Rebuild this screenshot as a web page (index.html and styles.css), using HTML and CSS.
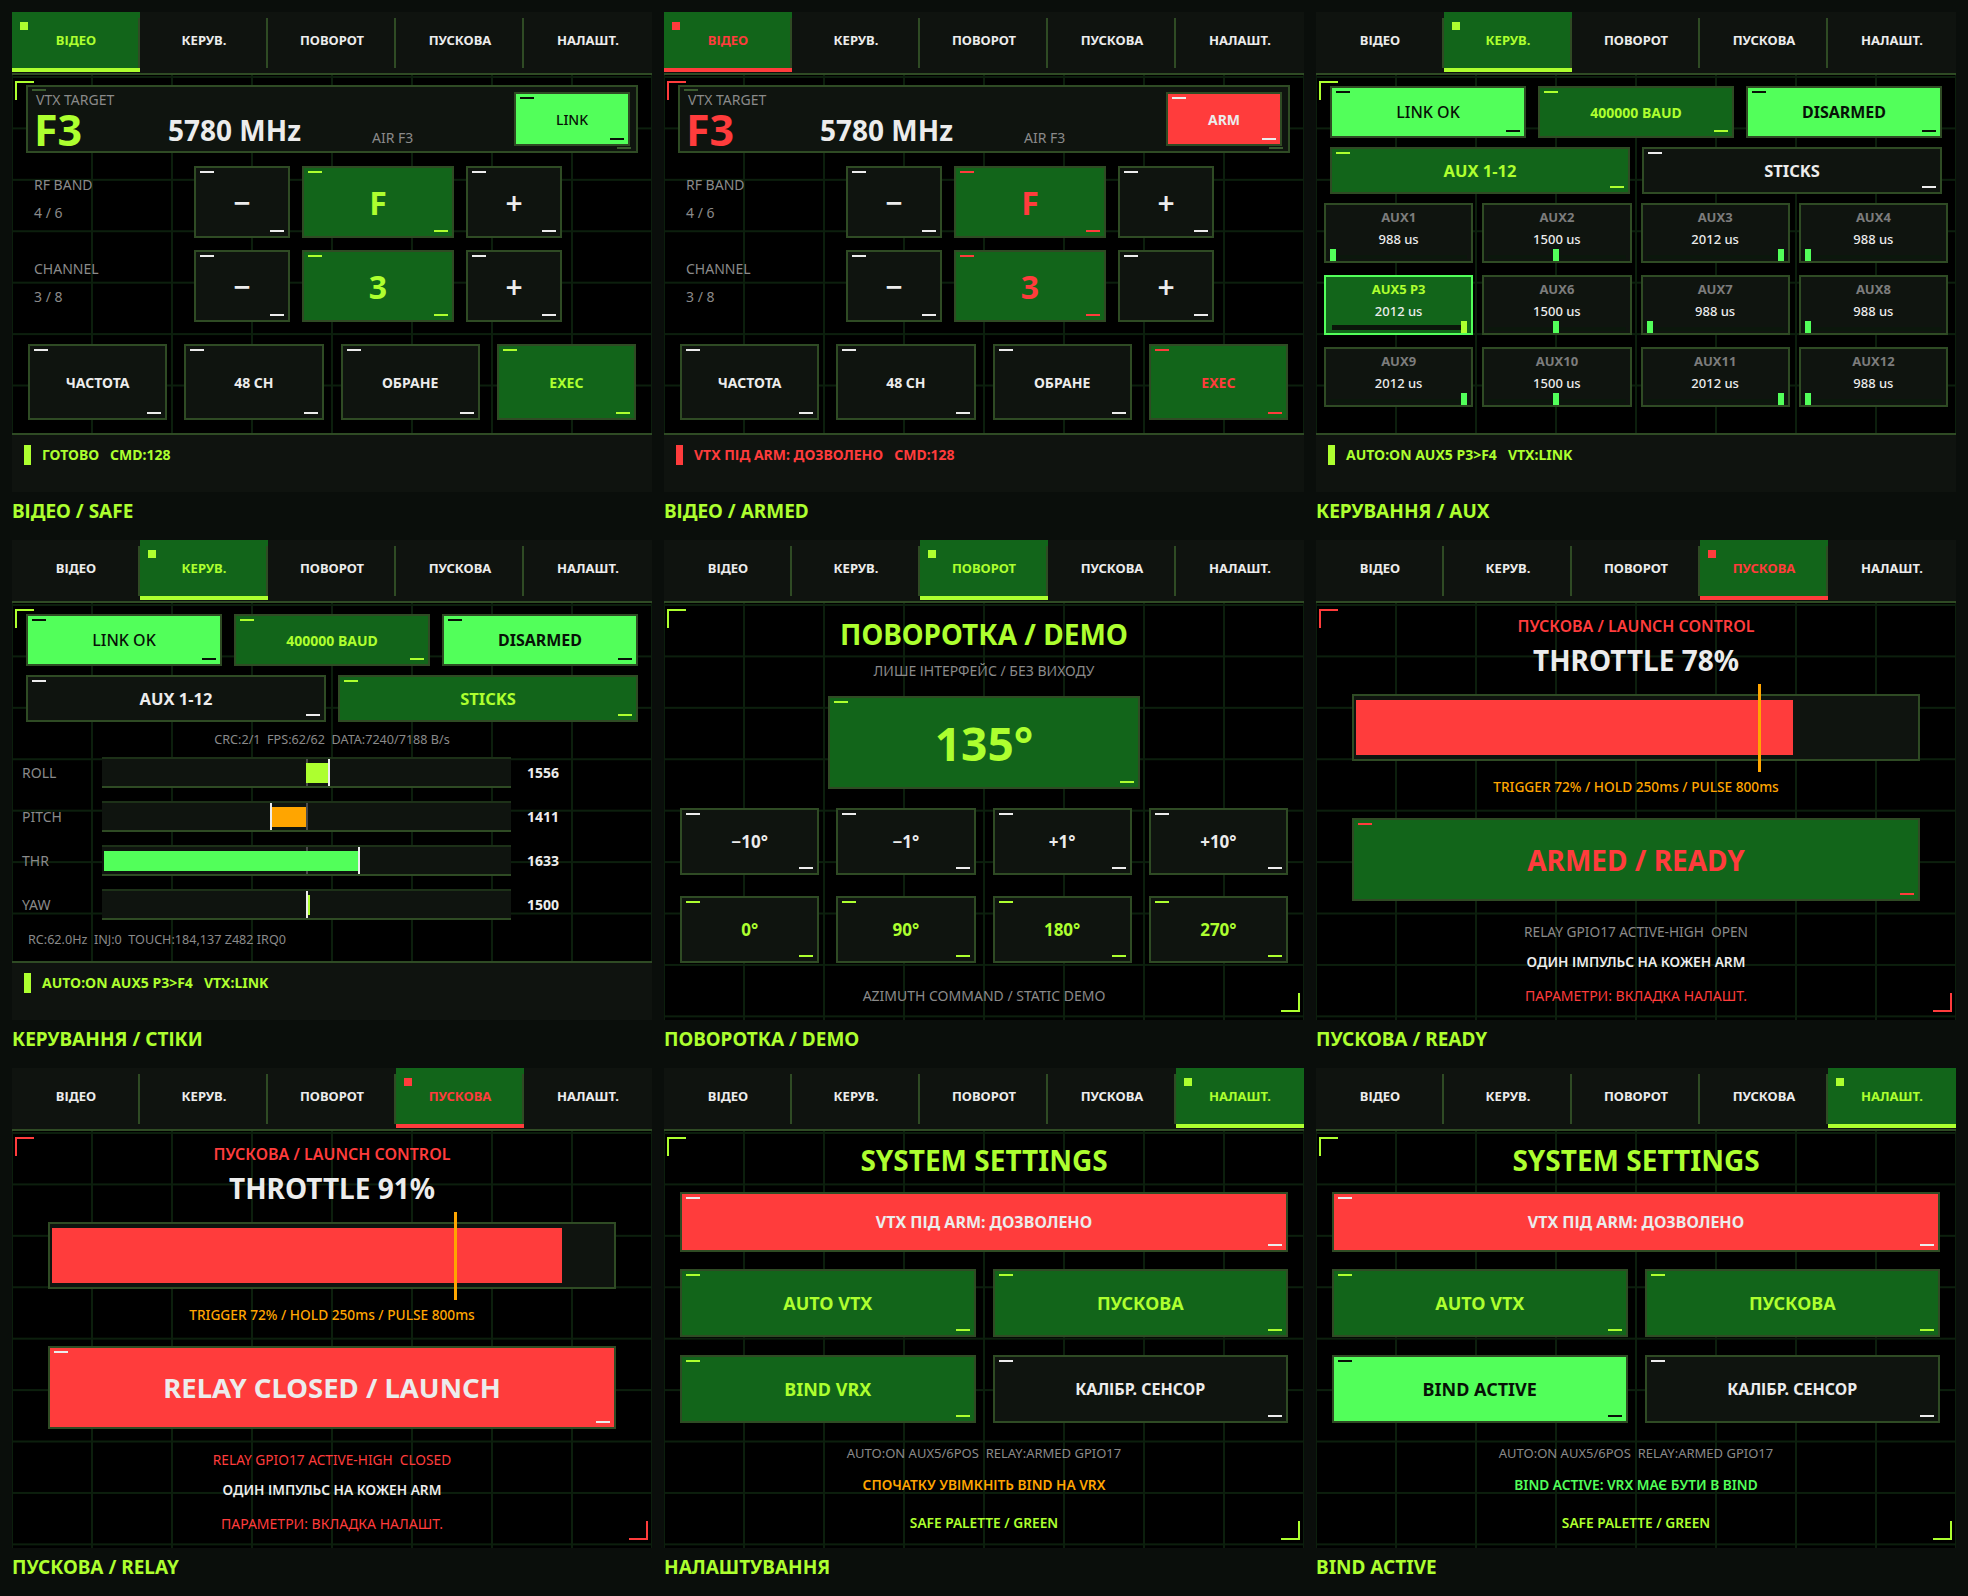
FILE: index.html
```html
<!DOCTYPE html>
<html lang="uk">
<head>
<meta charset="utf-8">
<title>Control UI states</title>
<link rel="stylesheet" href="styles.css">
</head>
<body>
<div class="board">

<section class="cell">
  <div class="screen">
    <nav class="tabs"><div class="tab on">ВІДЕО</div><div class="tab">КЕРУВ.</div><div class="tab">ПОВОРОТ</div><div class="tab">ПУСКОВА</div><div class="tab">НАЛАШТ.</div></nav>
    <div class="content">
      <div class="vtx">
        <div class="vtx-info"><div class="vtx-cap">VTX TARGET</div><div class="vtx-row"><span class="vtx-ch">F3</span><span class="vtx-freq">5780 MHz</span><span class="vtx-air">AIR F3</span></div></div>
        <div class="btn br link">LINK</div>
      </div>
      <div class="sel"><div class="sel-label"><div>RF BAND</div><div>4 / 6</div></div><div class="btn sym">−</div><div class="btn gr val">F</div><div class="btn sym">+</div></div>
      <div class="sel sel2"><div class="sel-label"><div>CHANNEL</div><div>3 / 8</div></div><div class="btn sym">−</div><div class="btn gr val">3</div><div class="btn sym">+</div></div>
      <div class="quad q-video"><div class="btn">ЧАСТОТА</div><div class="btn">48 CH</div><div class="btn">ОБРАНЕ</div><div class="btn gr">EXEC</div></div>
    </div>
    <div class="status"><i></i><span>ГОТОВО</span><span>CMD:128</span></div>
  </div>
  <div class="caption">ВІДЕО / SAFE</div>
</section>

<section class="cell">
  <div class="screen red">
    <nav class="tabs"><div class="tab on">ВІДЕО</div><div class="tab">КЕРУВ.</div><div class="tab">ПОВОРОТ</div><div class="tab">ПУСКОВА</div><div class="tab">НАЛАШТ.</div></nav>
    <div class="content">
      <div class="vtx">
        <div class="vtx-info"><div class="vtx-cap">VTX TARGET</div><div class="vtx-row"><span class="vtx-ch">F3</span><span class="vtx-freq">5780 MHz</span><span class="vtx-air">AIR F3</span></div></div>
        <div class="btn rd link arm">ARM</div>
      </div>
      <div class="sel"><div class="sel-label"><div>RF BAND</div><div>4 / 6</div></div><div class="btn sym">−</div><div class="btn gr rt val">F</div><div class="btn sym">+</div></div>
      <div class="sel sel2"><div class="sel-label"><div>CHANNEL</div><div>3 / 8</div></div><div class="btn sym">−</div><div class="btn gr rt val">3</div><div class="btn sym">+</div></div>
      <div class="quad q-video"><div class="btn">ЧАСТОТА</div><div class="btn">48 CH</div><div class="btn">ОБРАНЕ</div><div class="btn gr rt">EXEC</div></div>
    </div>
    <div class="status"><i></i><span>VTX ПІД ARM: ДОЗВОЛЕНО</span><span>CMD:128</span></div>
  </div>
  <div class="caption">ВІДЕО / ARMED</div>
</section>

<section class="cell">
  <div class="screen">
    <nav class="tabs"><div class="tab">ВІДЕО</div><div class="tab on">КЕРУВ.</div><div class="tab">ПОВОРОТ</div><div class="tab">ПУСКОВА</div><div class="tab">НАЛАШТ.</div></nav>
    <div class="content">
      <div class="tri"><div class="btn br lk">LINK OK</div><div class="btn gr sm">400000 BAUD</div><div class="btn br">DISARMED</div></div>
      <div class="duo"><div class="btn gr">AUX 1-12</div><div class="btn">STICKS</div></div>
      <div class="aux">
        <div class="auxc"><b>AUX1</b><span>988 us</span><i class="trk"></i><i class="mk" style="left:4px"></i></div>
        <div class="auxc"><b>AUX2</b><span>1500 us</span><i class="trk"></i><i class="mk" style="left:69px"></i></div>
        <div class="auxc"><b>AUX3</b><span>2012 us</span><i class="trk"></i><i class="mk" style="left:135px"></i></div>
        <div class="auxc"><b>AUX4</b><span>988 us</span><i class="trk"></i><i class="mk" style="left:4px"></i></div>
        <div class="auxc hi"><b>AUX5 P3</b><span>2012 us</span><i class="trk"></i><i class="mk" style="left:135px"></i></div>
        <div class="auxc"><b>AUX6</b><span>1500 us</span><i class="trk"></i><i class="mk" style="left:69px"></i></div>
        <div class="auxc"><b>AUX7</b><span>988 us</span><i class="trk"></i><i class="mk" style="left:4px"></i></div>
        <div class="auxc"><b>AUX8</b><span>988 us</span><i class="trk"></i><i class="mk" style="left:4px"></i></div>
        <div class="auxc"><b>AUX9</b><span>2012 us</span><i class="trk"></i><i class="mk" style="left:135px"></i></div>
        <div class="auxc"><b>AUX10</b><span>1500 us</span><i class="trk"></i><i class="mk" style="left:69px"></i></div>
        <div class="auxc"><b>AUX11</b><span>2012 us</span><i class="trk"></i><i class="mk" style="left:135px"></i></div>
        <div class="auxc"><b>AUX12</b><span>988 us</span><i class="trk"></i><i class="mk" style="left:4px"></i></div>
      </div>
    </div>
    <div class="status"><i></i><span>AUTO:ON AUX5 P3&gt;F4</span><span>VTX:LINK</span></div>
  </div>
  <div class="caption">КЕРУВАННЯ / AUX</div>
</section>

<section class="cell">
  <div class="screen">
    <nav class="tabs"><div class="tab">ВІДЕО</div><div class="tab on">КЕРУВ.</div><div class="tab">ПОВОРОТ</div><div class="tab">ПУСКОВА</div><div class="tab">НАЛАШТ.</div></nav>
    <div class="content">
      <div class="tri"><div class="btn br lk">LINK OK</div><div class="btn gr sm">400000 BAUD</div><div class="btn br">DISARMED</div></div>
      <div class="duo"><div class="btn">AUX 1-12</div><div class="btn gr">STICKS</div></div>
      <div class="crc">CRC:2/1&nbsp; FPS:62/62&nbsp; DATA:7240/7188 B/s</div>
      <div class="sticks">
        <div class="stk"><span class="nm">ROLL</span><div class="bar"><i class="c"></i><i class="f lime" style="left:204px;width:23px"></i><i class="w" style="left:226px"></i></div><span class="num">1556</span></div>
        <div class="stk"><span class="nm">PITCH</span><div class="bar"><i class="c"></i><i class="f orange" style="left:170px;width:34px"></i><i class="w" style="left:168px"></i></div><span class="num">1411</span></div>
        <div class="stk"><span class="nm">THR</span><div class="bar"><i class="c"></i><i class="f bright" style="left:2px;width:254px"></i><i class="w" style="left:256px"></i></div><span class="num">1633</span></div>
        <div class="stk"><span class="nm">YAW</span><div class="bar"><i class="c"></i><i class="w" style="left:204px"></i><i class="y" style="left:206px"></i></div><span class="num">1500</span></div>
      </div>
      <div class="rc">RC:62.0Hz&nbsp; INJ:0&nbsp; TOUCH:184,137 Z482 IRQ0</div>
    </div>
    <div class="status"><i></i><span>AUTO:ON AUX5 P3&gt;F4</span><span>VTX:LINK</span></div>
  </div>
  <div class="caption">КЕРУВАННЯ / СТІКИ</div>
</section>

<section class="cell">
  <div class="screen">
    <nav class="tabs"><div class="tab">ВІДЕО</div><div class="tab">КЕРУВ.</div><div class="tab on">ПОВОРОТ</div><div class="tab">ПУСКОВА</div><div class="tab">НАЛАШТ.</div></nav>
    <div class="content full">
      <div class="title t-rot">ПОВОРОТКА / DEMO</div>
      <div class="line gray l-sub">ЛИШЕ ІНТЕРФЕЙС / БЕЗ ВИХОДУ</div>
      <div class="btn gr azi">135°</div>
      <div class="quad q-rot1"><div class="btn">−10°</div><div class="btn">−1°</div><div class="btn">+1°</div><div class="btn">+10°</div></div>
      <div class="quad q-rot2"><div class="btn lt">0°</div><div class="btn lt">90°</div><div class="btn lt">180°</div><div class="btn lt">270°</div></div>
      <div class="line gray l-foot">AZIMUTH COMMAND / STATIC DEMO</div>
    </div>
  </div>
  <div class="caption">ПОВОРОТКА / DEMO</div>
</section>

<section class="cell">
  <div class="screen red">
    <nav class="tabs"><div class="tab">ВІДЕО</div><div class="tab">КЕРУВ.</div><div class="tab">ПОВОРОТ</div><div class="tab on">ПУСКОВА</div><div class="tab">НАЛАШТ.</div></nav>
    <div class="content full">
      <div class="line redt semi l-lc">ПУСКОВА / LAUNCH CONTROL</div>
      <div class="title white t-thr">THROTTLE 78%</div>
      <div class="thr"><i class="fill" style="width:437px"></i><i class="trig" style="left:404px"></i></div>
      <div class="line orange med l-trg">TRIGGER 72% / HOLD 250ms / PULSE 800ms</div>
      <div class="btn gr rt launch">ARMED / READY</div>
      <div class="line gray l-relay">RELAY GPIO17 ACTIVE-HIGH&nbsp; OPEN</div>
      <div class="line white semi l-one">ОДИН ІМПУЛЬС НА КОЖЕН ARM</div>
      <div class="line redt l-par">ПАРАМЕТРИ: ВКЛАДКА НАЛАШТ.</div>
    </div>
  </div>
  <div class="caption">ПУСКОВА / READY</div>
</section>

<section class="cell">
  <div class="screen red">
    <nav class="tabs"><div class="tab">ВІДЕО</div><div class="tab">КЕРУВ.</div><div class="tab">ПОВОРОТ</div><div class="tab on">ПУСКОВА</div><div class="tab">НАЛАШТ.</div></nav>
    <div class="content full">
      <div class="line redt semi l-lc">ПУСКОВА / LAUNCH CONTROL</div>
      <div class="title white t-thr">THROTTLE 91%</div>
      <div class="thr"><i class="fill" style="width:510px"></i><i class="trig" style="left:404px"></i></div>
      <div class="line orange med l-trg">TRIGGER 72% / HOLD 250ms / PULSE 800ms</div>
      <div class="btn rd launch relay">RELAY CLOSED / LAUNCH</div>
      <div class="line redt l-relay">RELAY GPIO17 ACTIVE-HIGH&nbsp; CLOSED</div>
      <div class="line white semi l-one">ОДИН ІМПУЛЬС НА КОЖЕН ARM</div>
      <div class="line redt l-par">ПАРАМЕТРИ: ВКЛАДКА НАЛАШТ.</div>
    </div>
  </div>
  <div class="caption">ПУСКОВА / RELAY</div>
</section>

<section class="cell">
  <div class="screen">
    <nav class="tabs"><div class="tab">ВІДЕО</div><div class="tab">КЕРУВ.</div><div class="tab">ПОВОРОТ</div><div class="tab">ПУСКОВА</div><div class="tab on">НАЛАШТ.</div></nav>
    <div class="content full">
      <div class="title t-set">SYSTEM SETTINGS</div>
      <div class="btn rd wide">VTX ПІД ARM: ДОЗВОЛЕНО</div>
      <div class="pair p1"><div class="btn gr">AUTO VTX</div><div class="btn gr">ПУСКОВА</div></div>
      <div class="pair p2"><div class="btn gr">BIND VRX</div><div class="btn cal">КАЛІБР. СЕНСОР</div></div>
      <div class="line gray l-s1">AUTO:ON AUX5/6POS&nbsp; RELAY:ARMED GPIO17</div>
      <div class="line orange semi l-s2">СПОЧАТКУ УВІМКНІТЬ BIND НА VRX</div>
      <div class="line limet semi l-s3">SAFE PALETTE / GREEN</div>
    </div>
  </div>
  <div class="caption">НАЛАШТУВАННЯ</div>
</section>

<section class="cell">
  <div class="screen">
    <nav class="tabs"><div class="tab">ВІДЕО</div><div class="tab">КЕРУВ.</div><div class="tab">ПОВОРОТ</div><div class="tab">ПУСКОВА</div><div class="tab on">НАЛАШТ.</div></nav>
    <div class="content full">
      <div class="title t-set">SYSTEM SETTINGS</div>
      <div class="btn rd wide">VTX ПІД ARM: ДОЗВОЛЕНО</div>
      <div class="pair p1"><div class="btn gr">AUTO VTX</div><div class="btn gr">ПУСКОВА</div></div>
      <div class="pair p2"><div class="btn br">BIND ACTIVE</div><div class="btn cal">КАЛІБР. СЕНСОР</div></div>
      <div class="line gray l-s1">AUTO:ON AUX5/6POS&nbsp; RELAY:ARMED GPIO17</div>
      <div class="line brightt semi l-s2">BIND ACTIVE: VRX МАЄ БУТИ В BIND</div>
      <div class="line limet semi l-s3">SAFE PALETTE / GREEN</div>
    </div>
  </div>
  <div class="caption">BIND ACTIVE</div>
</section>

</div>
</body>
</html>
```

FILE: styles.css
```css
:root {
  --bg: #0a0e0b;
  --bar: #0f130f;
  --olive: #2f4b24;
  --grid: #0c1f0d;
  --dk: #0f140f;
  --green: #12651a;
  --lime: #adff2f;
  --bright: #52ff5a;
  --red: #ff3c3c;
  --orange: #ffa500;
  --gray: #8a8a8a;
  --white: #ececec;
  --ink: #071207;
}

* { box-sizing: border-box; margin: 0; padding: 0; }

html, body { background: var(--bg); }

body {
  width: 1968px;
  height: 1596px;
  overflow: hidden;
  padding: 12px 0 0 12px;
  font-family: "Noto Sans", "DejaVu Sans Condensed", sans-serif;
  font-stretch: condensed;
  color: var(--white);
}

.board {
  display: grid;
  grid-template-columns: repeat(3, 640px);
  grid-template-rows: repeat(3, 528px);
  column-gap: 12px;
}

.screen {
  --acc: var(--lime);
  width: 640px;
  height: 480px;
  display: flex;
  flex-direction: column;
  background: #000;
  overflow: hidden;
}
.screen.red { --acc: var(--red); }

.caption {
  height: 48px;
  line-height: 38px;
  font-size: 19px;
  font-weight: 700;
  color: var(--lime);
}

/* tabs */
.tabs {
  display: flex;
  align-items: flex-start;
  height: 63px;
  flex: none;
  background: var(--bar);
  border-bottom: 2px solid var(--olive);
}
.tab {
  position: relative;
  flex: 1;
  height: 60px;
  padding-bottom: 5px;
  display: flex;
  align-items: center;
  justify-content: center;
  font-size: 13px;
  font-weight: 700;
  color: var(--white);
}
.tab:not(:last-child)::after {
  content: "";
  position: absolute;
  right: 0;
  top: 6px;
  bottom: 4px;
  width: 2px;
  background: var(--olive);
}
.tab.on {
  background: var(--green);
  color: var(--acc);
  box-shadow: inset 0 -4px 0 var(--acc);
}
.tab.on::before {
  content: "";
  position: absolute;
  left: 8px;
  top: 10px;
  width: 8px;
  height: 8px;
  background: var(--acc);
}

/* content area with grid */
.content {
  position: relative;
  flex: 1;
  display: flex;
  flex-direction: column;
  background-color: #000;
  background-image:
    linear-gradient(to right, var(--grid) 2px, transparent 2px),
    linear-gradient(to bottom, var(--grid) 2px, transparent 2px);
  background-size: 80px 51.43px;
  background-position: -1px 1px;
}
.content::before {
  content: "";
  position: absolute;
  left: 3px;
  top: 6px;
  width: 17px;
  height: 17px;
  border-top: 2px solid var(--acc);
  border-left: 2px solid var(--acc);
}
.content.full::after {
  content: "";
  position: absolute;
  right: 4px;
  bottom: 8px;
  width: 17px;
  height: 17px;
  border-bottom: 2px solid var(--acc);
  border-right: 2px solid var(--acc);
}

/* status bar */
.status {
  flex: none;
  height: 59px;
  display: flex;
  align-items: center;
  gap: 11px;
  padding: 0 12px 18px;
  background: var(--bar);
  border-top: 2px solid var(--olive);
  color: var(--acc);
  font-size: 14px;
  font-weight: 700;
  line-height: 20px;
}
.status i {
  width: 7px;
  height: 20px;
  background: currentColor;
}

/* buttons */
.btn {
  position: relative;
  display: flex;
  align-items: center;
  justify-content: center;
  background: var(--dk);
  border: 2px solid var(--olive);
  color: var(--white);
  font-size: 15px;
  font-weight: 700;
  white-space: nowrap;
}
.btn::before,
.btn::after {
  content: "";
  position: absolute;
  width: 14px;
  height: 2px;
  background: currentColor;
}
.btn::before { left: 4px; top: 3px; }
.btn::after { right: 4px; bottom: 4px; }

.btn.gr { background: var(--green); color: var(--lime); }
.btn.gr.rt { color: var(--red); }
.btn.br { background: var(--bright); color: var(--ink); }
.btn.rd { background: var(--red); color: var(--white); }
.btn.lt { color: var(--lime); }
.btn.sm { font-size: 14px; }

/* VTX target box */
.vtx {
  position: relative;
  display: flex;
  align-items: center;
  height: 68px;
  margin: 10px 14px 0;
  padding: 0 6px;
  background: var(--dk);
  border: 2px solid var(--olive);
}
.vtx::before,
.vtx::after {
  content: "";
  position: absolute;
  width: 14px;
  height: 2px;
  background: #3a5a2e;
}
.vtx::before { left: 4px; top: 2px; }
.vtx::after { right: 5px; bottom: 2px; }
.vtx-info {
  flex: 1;
  align-self: stretch;
  display: flex;
  flex-direction: column;
}
.vtx-cap {
  margin-top: 4px;
  padding-left: 2px;
  font-size: 14px;
  line-height: 18px;
  color: var(--gray);
}
.vtx-row {
  display: flex;
  align-items: center;
  height: 40px;
  margin-top: 1px;
}
.vtx-ch {
  width: 134px;
  font-size: 43px;
  font-weight: 700;
  line-height: 34px;
  color: var(--lime);
}
.red .vtx-ch { color: var(--red); }
.vtx-freq {
  width: 204px;
  font-size: 28px;
  font-weight: 700;
  line-height: 34px;
  color: var(--white);
}
.vtx-air {
  margin-top: 15px;
  font-size: 14px;
  color: var(--gray);
}
.btn.link {
  flex: none;
  width: 116px;
  height: 54px;
  font-size: 14px;
  font-weight: 500;
}
.btn.link.arm { font-weight: 700; }

/* band / channel selector rows */
.sel {
  display: grid;
  grid-template-columns: 148px 96px 152px 96px;
  column-gap: 12px;
  height: 72px;
  margin: 13px 0 0 22px;
}
.sel.sel2 { margin-top: 12px; }
.sel-label {
  padding-top: 9px;
  font-size: 14px;
  line-height: 19px;
  color: var(--gray);
}
.sel-label div + div { margin-top: 9px; }
.btn.sym { font-size: 30px; font-weight: 600; }
.btn.val { font-size: 32px; }

.quad {
  display: grid;
  grid-template-columns: repeat(4, 1fr);
  column-gap: 17px;
  padding: 0 16px;
}
.q-video { height: 76px; margin-top: 22px; }
.q-video .btn { font-size: 14px; }
.q-rot1 { height: 67px; margin-top: 19px; }
.q-rot2 { height: 67px; margin-top: 21px; }
.q-rot1 .btn, .q-rot2 .btn { font-size: 17px; }

/* control tab */
.tri {
  display: grid;
  grid-template-columns: repeat(3, 1fr);
  column-gap: 12px;
  height: 52px;
  margin: 11px 14px 0;
}
.tri .btn.br { font-size: 16px; }
.tri .btn.br.lk { font-weight: 500; }
.duo {
  display: grid;
  grid-template-columns: 1fr 1fr;
  column-gap: 12px;
  height: 47px;
  margin: 9px 14px 0;
}
.duo .btn { font-size: 16.5px; }
.aux {
  display: grid;
  grid-template-columns: repeat(4, 1fr);
  grid-auto-rows: 60px;
  column-gap: 9px;
  row-gap: 12px;
  margin: 9px 8px 0;
}
.auxc {
  position: relative;
  background: var(--dk);
  border: 2px solid var(--olive);
  text-align: center;
}
.auxc b {
  display: block;
  margin-top: 3px;
  font-size: 13px;
  line-height: 18px;
  font-weight: 700;
  color: #7c7c7c;
}
.auxc span {
  display: block;
  margin-top: 4px;
  font-size: 13px;
  line-height: 18px;
  font-weight: 500;
  color: var(--white);
}
.auxc .trk {
  position: absolute;
  left: 4px;
  right: 4px;
  bottom: 2px;
  height: 4px;
  background: #0b170c;
}
.auxc .mk {
  position: absolute;
  bottom: 0;
  width: 6px;
  height: 12px;
  background: var(--bright);
}
.auxc.hi { background: var(--green); border-color: var(--bright); }
.auxc.hi b { color: var(--lime); }
.auxc.hi .trk { left: 6px; right: 6px; bottom: 3px; height: 5px; background: #0a160a; }
.auxc.hi .mk { background: var(--lime); }

/* sticks */
.crc {
  margin-top: 8px;
  line-height: 20px;
  font-size: 12.6px;
  text-align: center;
  color: var(--gray);
}
.sticks {
  display: grid;
  row-gap: 13px;
  margin-top: 7px;
}
.stk {
  display: grid;
  grid-template-columns: 90px 409px 1fr;
  align-items: center;
  height: 31px;
}
.stk .nm {
  padding-left: 10px;
  font-size: 14px;
  color: var(--gray);
}
.stk .num {
  padding-left: 16px;
  font-size: 14px;
  font-weight: 700;
  color: var(--white);
}
.bar {
  position: relative;
  height: 31px;
  background: var(--dk);
  border-top: 2px solid #1d3118;
  border-bottom: 2px solid var(--olive);
}
.bar i { position: absolute; }
.bar .c { left: 204px; top: 0; bottom: 0; width: 2px; background: #4a4a4a; }
.bar .f { top: 4px; bottom: 3px; }
.bar .f.lime { background: var(--lime); }
.bar .f.orange { background: var(--orange); }
.bar .f.bright { background: var(--bright); }
.bar .w { top: 0; bottom: 0; width: 2px; background: var(--white); }
.bar .y { top: 4px; bottom: 3px; width: 2px; background: var(--lime); }
.rc {
  margin-top: 10px;
  padding-left: 16px;
  line-height: 20px;
  font-size: 12.6px;
  color: var(--gray);
}

/* centered text lines */
.title {
  line-height: 36px;
  font-size: 28px;
  font-weight: 700;
  text-align: center;
  color: var(--lime);
}
.title.white { color: var(--white); }
.line {
  line-height: 20px;
  font-size: 13.7px;
  text-align: center;
}
.semi { font-weight: 600; }
.med { font-weight: 500; }
.gray { color: var(--gray); }
.white { color: var(--white); }
.redt { color: var(--red); }
.orange { color: var(--orange); }
.limet { color: var(--lime); }
.brightt { color: var(--bright); }

/* rotator */
.t-rot { margin-top: 13px; }
.l-sub { margin-top: 9px; font-size: 14px; }
.btn.azi {
  align-self: center;
  width: 312px;
  height: 93px;
  margin-top: 15px;
  font-size: 46px;
}
.l-foot { margin-top: 23px; font-size: 14px; }

/* launch */
.l-lc { margin-top: 13px; font-size: 16px; }
.t-thr { margin-top: 6px; }
.thr {
  position: relative;
  height: 67px;
  margin: 16px 36px 0;
  background: var(--dk);
  border: 2px solid var(--olive);
}
.thr i { position: absolute; }
.thr .fill { left: 2px; top: 4px; bottom: 4px; background: var(--red); }
.thr .trig { top: -12px; bottom: -13px; width: 3px; background: var(--orange); }
.l-trg { margin-top: 16px; }
.btn.launch {
  height: 83px;
  margin: 21px 36px 0;
  font-size: 28px;
}
.btn.launch.relay { font-size: 27.5px; }
.l-relay { margin-top: 21px; }
.l-one { margin-top: 10px; }
.l-par { margin-top: 14px; font-size: 14px; }

/* settings */
.t-set { margin-top: 11px; }
.btn.wide { height: 60px; margin: 14px 16px 0; font-size: 16px; }
.pair {
  display: grid;
  grid-template-columns: 1fr 1fr;
  column-gap: 17px;
  height: 68px;
  margin: 17px 16px 0;
}
.pair .btn { font-size: 18px; }
.pair .btn.cal { font-size: 16px; }
.pair.p2 { margin-top: 18px; }
.l-s1 { margin-top: 20px; font-size: 13px; }
.l-s2 { margin-top: 12px; }
.l-s3 { margin-top: 18px; }
```
